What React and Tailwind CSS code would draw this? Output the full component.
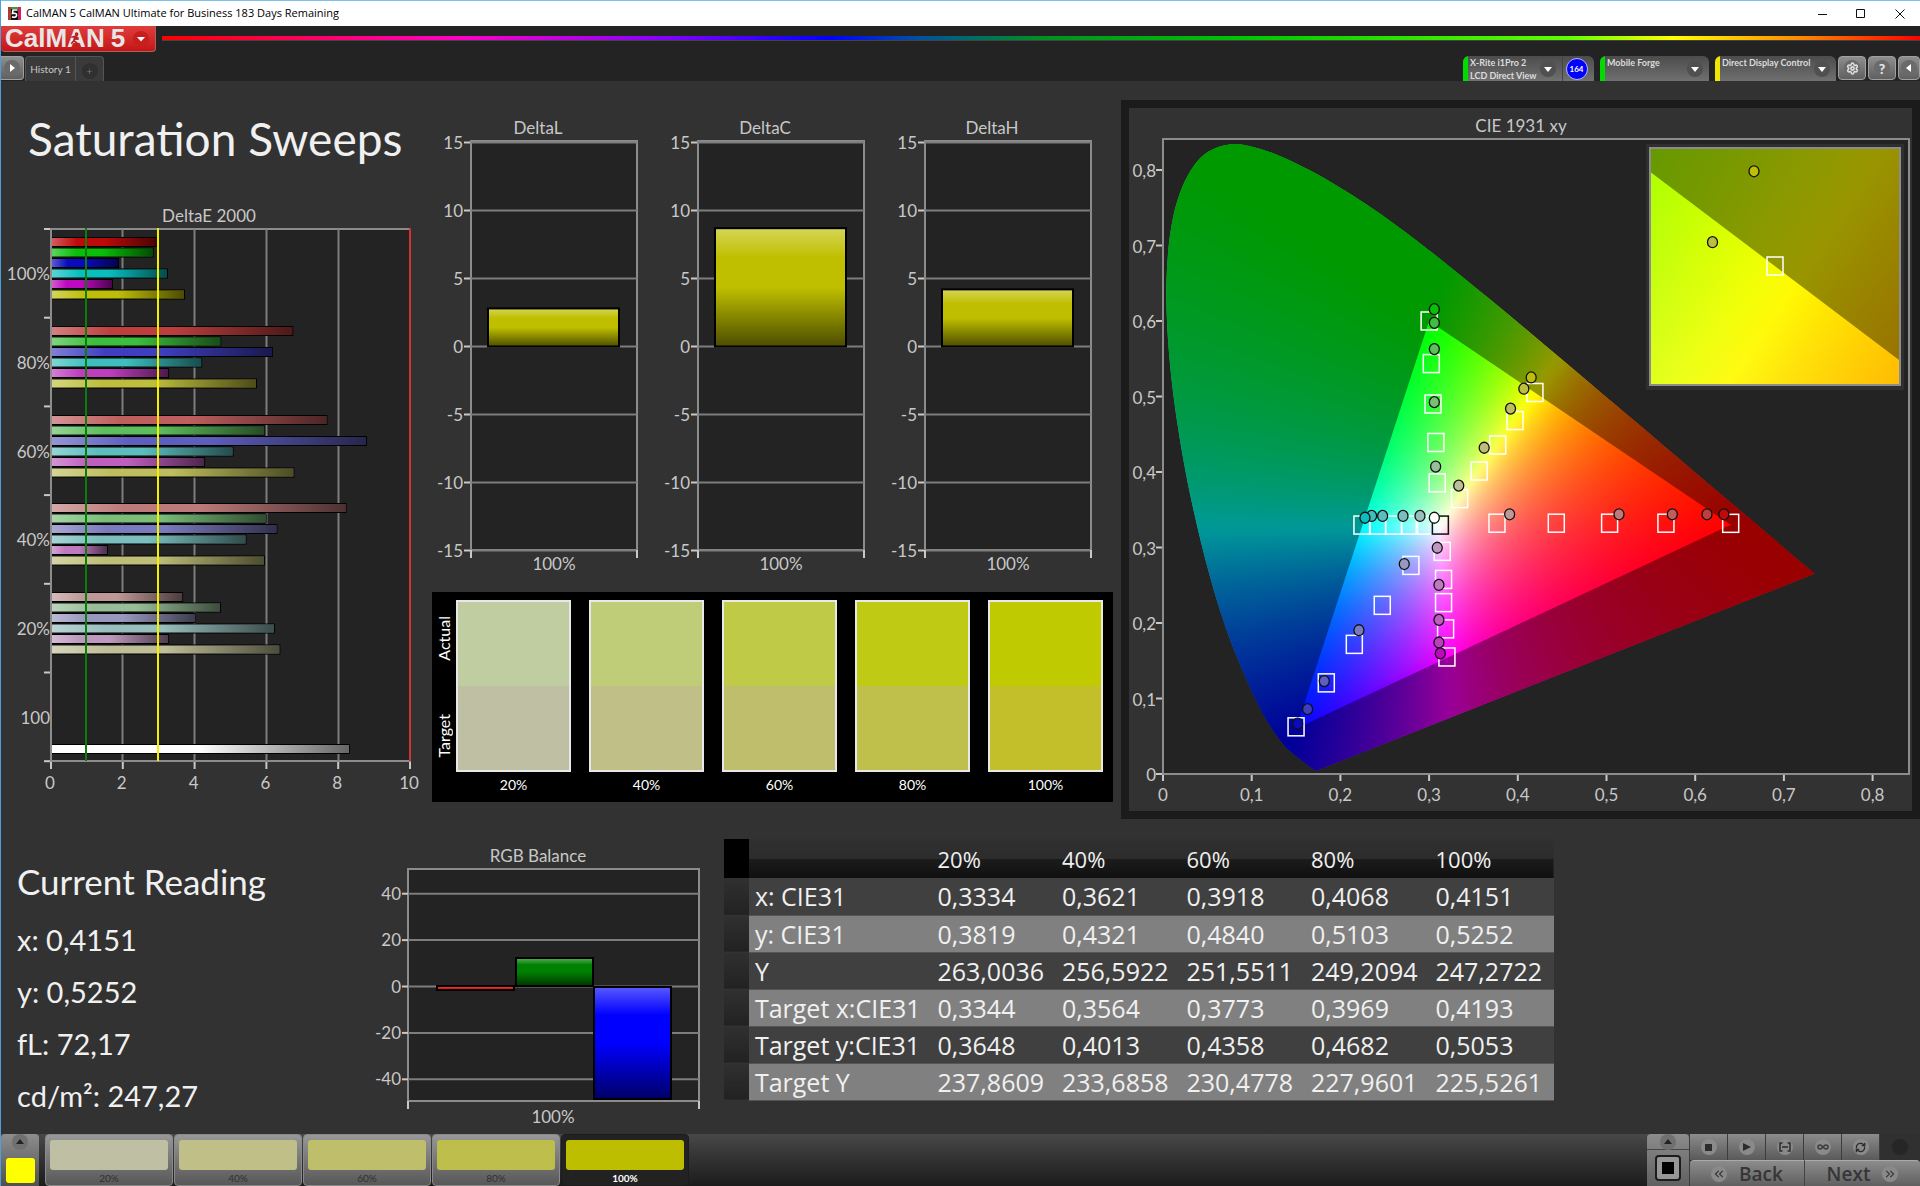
import { ChevronsLeft, ChevronsRight, Settings, Infinity as Loop, RefreshCw } from 'lucide-react';

const LEVELS = ['20%', '40%', '60%', '80%', '100%'];

const HUES = {
  red: [1, 0, 0],
  green: [0, 1, 0],
  blue: [0, 0, 1],
  cyan: [0, 1, 1],
  magenta: [1, 0, 1],
  yellow: [1, 1, 0],
};
const HUE_NAMES = Object.keys(HUES);
// weakest channel per saturation level, 20% to 100%
const LOW = [152, 122, 94, 62, 10];

const tint = (hue, level) =>
  `rgb(${HUES[hue].map((c) => (c ? 190 : LOW[level])).join(',')})`;

const deltaE = [
  { label: '100%', level: 4, values: [2.93, 2.85, 1.89, 3.25, 1.72, 3.72] },
  { label: '80%', level: 3, values: [6.73, 4.73, 6.16, 4.2, 3.28, 5.72] },
  { label: '60%', level: 2, values: [7.68, 5.95, 8.78, 5.07, 4.28, 6.76] },
  { label: '40%', level: 1, values: [8.21, 5.99, 6.29, 5.43, 1.58, 5.94] },
  { label: '20%', level: 0, values: [3.67, 4.72, 4.02, 6.22, 3.28, 6.37] },
];

const swatches = [
  { label: '20%', actual: '#bfcda0', target: '#bfbfa4', chip: '#bfbfa3' },
  { label: '40%', actual: '#bfcd78', target: '#c0bf87', chip: '#c0bf87' },
  { label: '60%', actual: '#bfcb46', target: '#bfbe6c', chip: '#bfbe6b' },
  { label: '80%', actual: '#bfca14', target: '#bfc04c', chip: '#bebe4c' },
  { label: '100%', actual: '#bfcb00', target: '#c2bf2a', chip: '#bebe00' },
];

const rows = [
  ['x: CIE31', '0,3334', '0,3621', '0,3918', '0,4068', '0,4151'],
  ['y: CIE31', '0,3819', '0,4321', '0,4840', '0,5103', '0,5252'],
  ['Y', '263,0036', '256,5922', '251,5511', '249,2094', '247,2722'],
  ['Target x:CIE31', '0,3344', '0,3564', '0,3773', '0,3969', '0,4193'],
  ['Target y:CIE31', '0,3648', '0,4013', '0,4358', '0,4682', '0,5053'],
  ['Target Y', '237,8609', '233,6858', '230,4778', '227,9601', '225,5261'],
];

const targets = [
  [0.3, 0.6], [0.3025, 0.5436], [0.3044, 0.4901], [0.3077, 0.4391], [0.3092, 0.3856],
  [0.3344, 0.3648], [0.3564, 0.4013], [0.3773, 0.4358], [0.3969, 0.4682], [0.4193, 0.5053],
  [0.3765, 0.3322], [0.4434, 0.3322], [0.5035, 0.3322], [0.567, 0.3322], [0.64, 0.332],
  [0.2243, 0.3297], [0.242, 0.3297], [0.26, 0.3297], [0.278, 0.3297], [0.2946, 0.3297],
  [0.3148, 0.2949], [0.3163, 0.2577], [0.3163, 0.227], [0.3186, 0.1922], [0.3201, 0.155],
  [0.2795, 0.2763], [0.2472, 0.2234], [0.2157, 0.1717], [0.1841, 0.1207], [0.15, 0.0625],
];

// listed from 20% to 100%
const readings = {
  green: [[0.3074, 0.4072], [0.3059, 0.4925], [0.3059, 0.5628], [0.3059, 0.5976], [0.3059, 0.6156]],
  yellow: [[0.3334, 0.3819], [0.3621, 0.4321], [0.3918, 0.484], [0.4068, 0.5103], [0.4151, 0.5252]],
  red: [[0.3908, 0.344], [0.5141, 0.344], [0.5742, 0.344], [0.6133, 0.344], [0.6324, 0.344]],
  cyan: [[0.2897, 0.3418], [0.2706, 0.3418], [0.2476, 0.3418], [0.2352, 0.3418], [0.2277, 0.3394]],
  magenta: [[0.3092, 0.2997], [0.3111, 0.2504], [0.3111, 0.2042], [0.3111, 0.1742], [0.3126, 0.1598]],
  blue: [[0.272, 0.2781], [0.2209, 0.1904], [0.1818, 0.1231], [0.163, 0.0859], [0.1518, 0.0667]],
};

const PRIMARIES = [[0.64, 0.33], [0.3, 0.6], [0.15, 0.06]];

const LOCUS = [
  [0.1741, 0.005], [0.1714, 0.0051], [0.1689, 0.0069], [0.1644, 0.0109], [0.1566, 0.0177],
  [0.144, 0.0297], [0.1355, 0.0399], [0.1241, 0.0578], [0.1096, 0.0868], [0.0913, 0.1327],
  [0.0687, 0.2007], [0.0454, 0.295], [0.0235, 0.4127], [0.0082, 0.5384], [0.0039, 0.6548],
  [0.0139, 0.7502], [0.0389, 0.812], [0.0743, 0.8338], [0.1142, 0.8262], [0.1547, 0.8059],
  [0.1929, 0.7816], [0.2296, 0.7543], [0.2658, 0.7243], [0.3016, 0.6923], [0.3731, 0.6245],
  [0.4441, 0.5547], [0.5125, 0.4866], [0.5752, 0.4242], [0.627, 0.3725], [0.6658, 0.334],
  [0.6915, 0.3083], [0.719, 0.2809], [0.7347, 0.2653],
];

const xyToRgb = (x, y) => {
  const z = 1 - x - y;
  return [
    3.2406 * x - 1.5372 * y - 0.4986 * z,
    -0.9689 * x + 1.8758 * y + 0.0415 * z,
    0.0557 * x - 0.204 * y + 1.057 * z,
  ];
};

// The ratio of two primaries is constant on every ray from the third one, so
// three conic gradients blended with "darken" give the full-brightness colours.
function gamutStyle(view) {
  const layers = PRIMARIES.map(([vx, vy], k) => {
    const stops = [];
    for (let a = 0; a <= 360; a += 1) {
      const t = (a * Math.PI) / 180;
      const rgb = xyToRgb(
        vx + (Math.sin(t) * 5) / view.sx,
        vy + (Math.cos(t) * 5) / view.sy
      ).map((c, i) => (i === k ? 0 : Math.max(0, c)));
      const max = Math.max(...rgb, 1e-6);
      const col = rgb.map((c, i) => (i === k ? 255 : Math.round((255 * c) / max)));
      stops.push(`rgb(${col.join(',')}) ${a}deg`);
    }
    return `conic-gradient(at ${view.px(vx)}px ${view.py(vy)}px, ${stops.join(',')})`;
  });
  return { background: layers.join(','), backgroundBlendMode: 'darken' };
}

function locusPath(view) {
  const p = LOCUS.map(([x, y]) => [view.px(x), view.py(y)]);
  let d = `M${p[0]}`;
  for (let i = 0; i < p.length - 1; i++) {
    const a = p[i - 1] || p[i];
    const b = p[i];
    const c = p[i + 1];
    const e = p[i + 2] || c;
    d += `C${b[0] + (c[0] - a[0]) / 6},${b[1] + (c[1] - a[1]) / 6} ${c[0] - (e[0] - b[0]) / 6},${c[1] - (e[1] - b[1]) / 6} ${c}`;
  }
  return d + 'Z';
}

const makeView = (x0, y0, sx, sy) => ({
  sx,
  sy,
  px: (x) => x0 + x * sx,
  py: (y) => y0 - y * sy,
});

const mainView = makeView(34, 666, 887, 755);
const zoomView = makeView(125 - 0.4193 * 5000, 118 + 0.5053 * 4760, 5000, 4760);

function Gamut({ view, width, height, id }) {
  const locus = locusPath(view);
  const tri = PRIMARIES.map(([x, y]) => `${view.px(x)},${view.py(y)}`).join('L');
  return (
    <g>
      <clipPath id={id}>
        <path d={locus} />
      </clipPath>
      <g clipPath={`url(#${id})`}>
        <foreignObject x="0" y="0" width={width} height={height}>
          <div className="h-full w-full" style={gamutStyle(view)} />
        </foreignObject>
        <path d={`${locus}M${tri}Z`} fillRule="evenodd" fill="#000" fillOpacity="0.4" />
      </g>
      {targets.map(([x, y]) => (
        <rect
          key={`${x}-${y}`}
          x={view.px(x) - 8}
          y={view.py(y) - 9}
          width="16"
          height="18"
          fill="none"
          stroke="#fff"
          strokeWidth="1.5"
        />
      ))}
      <rect
        x={view.px(0.3127) - 8}
        y={view.py(0.3297) - 9}
        width="16"
        height="18"
        fill="none"
        stroke="#111"
        strokeWidth="1.5"
      />
      {Object.entries(readings).map(([hue, list]) =>
        list.map(([x, y], i) => (
          <ellipse
            key={hue + i}
            cx={view.px(x)}
            cy={view.py(y)}
            rx="5"
            ry="5.5"
            fill={tint(hue, i)}
            stroke="#111"
            strokeWidth="1.3"
          />
        ))
      )}
      <ellipse
        cx={view.px(0.3059)}
        cy={view.py(0.3394)}
        rx="5"
        ry="5.5"
        fill="#fff"
        stroke="#111"
        strokeWidth="1.3"
      />
    </g>
  );
}

function CieChart() {
  return (
    <svg viewBox="0 0 783 703" className="block h-auto w-full bg-[#323232]" role="img" aria-label="CIE 1931 xy">
      <text x="392" y="24" textAnchor="middle" className="fill-[#c8c8c8] text-[17px]">
        CIE 1931 xy
      </text>
      <rect x="34" y="31" width="746" height="635" fill="#232323" />
      <Gamut view={mainView} width="783" height="703" id="locus-main" />
      <rect x="34" y="31" width="746" height="635" fill="none" stroke="#8c8c8c" strokeWidth="2" />
      {[0, 1, 2, 3, 4, 5, 6, 7, 8].map((n) => (
        <g key={n} className="fill-[#c8c8c8] text-[17px]">
          <path
            d={`M${mainView.px(n / 10)} 667v6M27 ${mainView.py(n / 10)}h6`}
            stroke="#c8c8c8"
            strokeWidth="2"
          />
          <text x={mainView.px(n / 10)} y="693" textAnchor="middle">
            {n ? `0,${n}` : '0'}
          </text>
          <text x="27" y={mainView.py(n / 10) + 7} textAnchor="end">
            {n ? `0,${n}` : '0'}
          </text>
        </g>
      ))}
      <rect x="517" y="36" width="258" height="246" fill="#2f2f2f" />
      <svg x="521" y="40" width="250" height="237" viewBox="0 0 250 237">
        <Gamut view={zoomView} width="250" height="237" id="locus-zoom" />
      </svg>
      <rect x="521" y="40" width="250" height="237" fill="none" stroke="#8c8c8c" strokeWidth="2" />
    </svg>
  );
}

function HBar({ y, value, color }) {
  const w = value * 36;
  return (
    <g>
      <rect x="50" y={y - 5} width={w} height="10" fill="#000" />
      <rect x="50" y={y - 4} width={w - 1} height="8" fill={color} />
      <rect x="50" y={y - 4} width={w - 1} height="8" fill="url(#gloss-x)" />
    </g>
  );
}

function DeltaEChart() {
  const band = 88.8;
  return (
    <svg viewBox="0 0 431 610" className="block h-auto w-full" role="img" aria-label="DeltaE 2000">
      <text x="208" y="26" textAnchor="middle" className="fill-[#c8c8c8] text-[17px]">
        DeltaE 2000
      </text>
      <rect x="50" y="33" width="359" height="532" fill="#232323" stroke="#8c8c8c" strokeWidth="2" />
      {[2, 4, 6, 8].map((n) => (
        <path key={n} d={`M${49.5 + n * 36} 33v532`} stroke="#7d7d7d" strokeWidth="2" />
      ))}
      {deltaE.map(({ values, level }, g) =>
        values.map((v, i) => (
          <HBar
            key={`${g}-${i}`}
            y={46 + Math.round(g * band) + i * 10.5}
            value={v}
            color={tint(HUE_NAMES[i], level)}
          />
        ))
      )}
      <HBar y={553} value={8.3} color="#fff" />
      <path d="M50 33v532" stroke="#8c8c8c" strokeWidth="2" />
      <path d="M85 32v533" stroke="#0a7d0a" strokeWidth="2" />
      <path d="M157 32v533" stroke="#f0f000" strokeWidth="2" />
      <path d="M409 32v533" stroke="#d23232" strokeWidth="2" />
      {[0, 1, 2, 3, 4, 5, 6].map((n) => (
        <path key={n} d={`M43 ${33 + n * 88.7}h6`} stroke="#c8c8c8" strokeWidth="2" />
      ))}
      <g className="fill-[#c8c8c8] text-[17px]">
        {[...deltaE.map((d) => d.label), '100'].map((label, i) => (
          <text key={i} x="49" y={84 + i * band} textAnchor="end">
            {label}
          </text>
        ))}
        {[0, 2, 4, 6, 8, 10].map((n) => (
          <g key={n}>
            <path d={`M${50 + n * 35.9} 566v7`} stroke="#c8c8c8" strokeWidth="2" />
            <text x={49 + n * 35.9} y="593" textAnchor="middle">
              {n}
            </text>
          </g>
        ))}
      </g>
    </svg>
  );
}

function DeltaChart({ title, value }) {
  const y = (n) => 246.5 - n * 13.6;
  return (
    <svg viewBox="0 0 227 484" className="block h-auto w-full" role="img" aria-label={title}>
      <text x="106" y="34" textAnchor="middle" className="fill-[#c8c8c8] text-[17px]">
        {title}
      </text>
      <rect x="39" y="41" width="166" height="409" fill="#232323" stroke="#8c8c8c" strokeWidth="2" />
      {[15, 10, 5, 0, -5, -10, -15].map((n) => (
        <g key={n}>
          <path d={`M39 ${y(n)}h166`} stroke="#7d7d7d" strokeWidth="2" />
          <path d={`M32 ${y(n)}h6`} stroke="#c8c8c8" strokeWidth="2" />
          <text x="31" y={y(n) + 6} textAnchor="end" className="fill-[#c8c8c8] text-[17px]">
            {n}
          </text>
        </g>
      ))}
      <path d="M39 450v8M205 450v8" stroke="#c8c8c8" strokeWidth="2" />
      <rect x="56" y={y(value)} width="131" height={value * 13.6} fill="#bfbf00" />
      <rect
        x="56"
        y={y(value)}
        width="131"
        height={value * 13.6}
        fill="url(#gloss-y)"
        stroke="#000"
        strokeWidth="2"
      />
      <text x="122" y="470" textAnchor="middle" className="fill-[#c8c8c8] text-[17px]">
        100%
      </text>
    </svg>
  );
}

function RgbBalance() {
  const y = (n) => 147.5 - n * 2.32;
  const bars = [
    { x: 41, top: 147, h: 4, color: '#ff2020' },
    { x: 120, top: 119, h: 28, color: '#008000' },
    { x: 198, top: 148, h: 112, color: '#0000ff' },
  ];
  return (
    <svg viewBox="-40 0 368 294" className="block h-auto w-full" role="img" aria-label="RGB Balance">
      <text x="142" y="23" textAnchor="middle" className="fill-[#c8c8c8] text-[17px]">
        RGB Balance
      </text>
      <rect x="12" y="30" width="291" height="232" fill="#232323" stroke="#8c8c8c" strokeWidth="2" />
      {[40, 20, 0, -20, -40].map((n) => (
        <g key={n}>
          <path d={`M12 ${y(n)}h291`} stroke="#7d7d7d" strokeWidth="2" />
          <path d={`M6 ${y(n)}h6`} stroke="#c8c8c8" strokeWidth="2" />
          <text x="5" y={y(n) + 6} textAnchor="end" className="fill-[#c8c8c8] text-[17px]">
            {n}
          </text>
        </g>
      ))}
      <path d="M12 262v8M303 262v8" stroke="#c8c8c8" strokeWidth="2" />
      {bars.map((b) => (
        <g key={b.color}>
          <rect x={b.x} y={b.top} width="77" height={b.h} fill={b.color} />
          <rect
            x={b.x}
            y={b.top}
            width="77"
            height={b.h}
            fill="url(#gloss-y)"
            stroke="#000"
            strokeWidth="2"
          />
        </g>
      ))}
      <text x="157" y="284" textAnchor="middle" className="fill-[#c8c8c8] text-[17px]">
        100%
      </text>
    </svg>
  );
}

function SwatchPanel() {
  return (
    <div className="mt-2 mr-2 flex bg-black pt-2 pr-2.5 pb-1 text-white">
      <div className="flex w-6 flex-col items-center justify-between pt-4 pb-10 text-base leading-5">
        <span className="rotate-180 [writing-mode:vertical-rl]">Actual</span>
        <span className="rotate-180 [writing-mode:vertical-rl]">Target</span>
      </div>
      <div className="grid flex-1 grid-cols-5 gap-[18px]">
        {swatches.map((s) => (
          <div key={s.label} className="text-center text-[14px] leading-[26px]">
            <div className="flex h-[172px] flex-col border-2 border-[#e8e8e8]">
              <div className="flex-1" style={{ background: s.actual }} />
              <div className="flex-1" style={{ background: s.target }} />
            </div>
            {s.label}
          </div>
        ))}
      </div>
    </div>
  );
}

function ReadingTable() {
  return (
    <table className="w-full table-fixed border-collapse self-start font-['Open_Sans',sans-serif] text-[25px] text-[#f0f0f0]">
      <colgroup>
        <col className="w-[3%]" />
        <col className="w-[22%]" />
        <col className="w-[15%]" />
        <col className="w-[15%]" />
        <col className="w-[15%]" />
        <col className="w-[15%]" />
        <col className="w-[15%]" />
      </colgroup>
      <thead>
        <tr className="h-[39px] bg-[linear-gradient(#303030,#2c2c2c_50%,#1c1c1c_50%,#101010)] text-left text-[22px]">
          <td className="bg-black" />
          <td />
          {LEVELS.map((l) => (
            <th key={l} scope="col" className="py-0 pl-1.5 leading-8 font-medium">
              {l}
            </th>
          ))}
        </tr>
      </thead>
      <tbody>
        {rows.map(([name, ...vals]) => (
          <tr
            key={name}
            className="h-[37px] leading-8 whitespace-nowrap odd:bg-[#404040] even:bg-[#808080]"
          >
            <td className="border-b border-[#333] bg-gradient-to-b from-[#303030] to-[#222]" />
            <th scope="row" className="border-b border-[#555] py-0 pl-1.5 text-left font-normal">
              {name}
            </th>
            {vals.map((v, i) => (
              <td key={i} className="border-b border-[#555] py-0 pl-1.5">
                {v}
              </td>
            ))}
          </tr>
        ))}
      </tbody>
    </table>
  );
}

function Knob({ children, className = 'bg-[#6a6a6a]' }) {
  return (
    <span className={`flex h-4 w-4 shrink-0 items-center justify-center rounded-full ${className}`}>
      {children}
    </span>
  );
}

function Arrow({ d = 'M0 0h8L4 5z', className = 'text-white' }) {
  return (
    <svg width="8" height="8" viewBox="0 0 8 8" className={className} fill="currentColor">
      <path d={d} />
    </svg>
  );
}

function Device({ color, lines, width, badge }) {
  return (
    <div className={`flex h-[25px] overflow-hidden rounded-t-md bg-gradient-to-b from-[#4c4c4c] to-[#707070] ${width}`}>
      <button type="button" aria-haspopup="listbox" className="flex min-w-0 flex-1 text-left text-[9px] leading-[13px] font-bold text-[#dcdcdc]">
        <span className={`mr-0.5 w-[5px] shrink-0 self-stretch ${color}`} />
        <span className="flex-1 whitespace-nowrap">
          {lines.map((l) => (
            <span key={l} className="block">
              {l}
            </span>
          ))}
        </span>
        <span className="mr-1.5 self-center">
          <Knob className="bg-[#505050]">
            <Arrow d="M0 2h8L4 7z" />
          </Knob>
        </span>
      </button>
      {badge && (
        <span className="flex w-8 items-center justify-center border-l border-[#444] pr-1">
          <span className="flex h-[22px] w-[22px] shrink-0 items-center justify-center rounded-full border border-[#b4b4ff] bg-[#0000ff] text-[8px] font-bold text-white">
            {badge}
          </span>
        </span>
      )}
    </div>
  );
}

function SquareButton({ label, width = 'w-7', children }) {
  return (
    <button
      type="button"
      aria-label={label}
      className={`flex h-6 items-center justify-center rounded-[4px] border border-[#a0a0a0] bg-gradient-to-b from-[#8e8e8e] to-[#606060] ${width}`}
    >
      {children}
    </button>
  );
}

function Header() {
  return (
    <header>
      <div className="flex h-[26px] items-center border-t border-[#7ac0ee] bg-white pl-[7px] font-['Open_Sans',sans-serif] text-[11px] text-black">
        <svg width="13" height="13" viewBox="0 0 13 13" className="mr-[5px]">
          <rect width="13" height="13" fill="#111" />
          <path d="M0 0h3v13H0z" fill="#b03a2e" />
          <path d="M10 0h3v13h-3z" fill="#d02060" />
          <path d="M3 0h7v2H3z" fill="#3c9a3c" />
          <path d="M9.500 3H5L4.500 6.500C8 5.500 9 7 8.500 8.800S5.500 10.500 4 9.800" fill="none" stroke="#fff" strokeWidth="1.600" />
        </svg>
        <span className="flex-1">CalMAN 5 CalMAN Ultimate for Business 183 Days Remaining</span>
        <button type="button" aria-label="Minimize" className="flex w-[38px] justify-center">
          <svg width="10" height="10" stroke="#111"><path d="M0 5.500h9" /></svg>
        </button>
        <button type="button" aria-label="Maximize" className="flex w-[38px] justify-center">
          <svg width="10" height="10" stroke="#111" fill="none"><path d="M.5 .5h8v8h-8z" /></svg>
        </button>
        <button type="button" aria-label="Close" className="flex w-10 justify-center">
          <svg width="10" height="10" stroke="#111"><path d="M.5 .5l9 9M9.500 .5l-9 9" /></svg>
        </button>
      </div>
      <div className="flex h-[30px] items-start bg-[#232323]">
        <button
          type="button"
          aria-label="CalMAN 5 menu"
          className="flex h-[26px] w-[155px] shrink-0 items-center rounded-b-[4px] border-r border-b border-[#a86060] bg-gradient-to-b from-[#e03c3c] to-[#c41414] pb-0.5 pl-1"
        >
          <span className="relative mr-1.5 font-['Liberation_Sans',sans-serif] text-[26px] leading-5 font-bold text-[#e6e6e6]">
            CalMAN
            <svg className="absolute top-1 left-[65px]" width="10" height="15" viewBox="0 0 9 14" fill="none" stroke="#b41c1c" strokeWidth="1.400">
              <circle cx="6" cy="2" r="1" />
              <path d="M1 5l3-1 2 2 2-.5M4 4.500L3.500 8l2.500 2v3M3.500 8L1 11" />
            </svg>
          </span>
          <span className="font-['Liberation_Sans',sans-serif] text-[26px] leading-5 font-bold text-[#e6e6e6]">5</span>
          <span className="mt-0.5 ml-2">
            <Knob className="bg-[#c81e1e]">
              <Arrow d="M0 2h8L4 6.500z" />
            </Knob>
          </span>
        </button>
        <div className="mt-[10px] ml-1.5 h-[5px] flex-1 border-b border-[#444] bg-[linear-gradient(90deg,#ff0000,#ff00c8_17%,#8000ff_29%,#0000ff_38%,#0050a0_43%,#009020_50%,#00c800_62%,#60ff00_80%,#ffff00_86%,#ff8c00_93%,#ff0000)]" />
      </div>
      <div className="flex h-[25px] items-start bg-[#232323]">
        <button
          type="button"
          aria-label="Expand"
          className="mr-px flex h-6 w-[23px] items-center justify-center rounded-r-[4px] border border-l-0 border-[#a0a0a0] bg-gradient-to-b from-[#8e8e8e] to-[#606060]"
        >
          <Knob>
            <Arrow d="M2 0v8l5-4z" />
          </Knob>
        </button>
        <nav className="flex h-full rounded-t-[4px] border-x border-t border-[#555] bg-[#3a3a3a] text-[10px] text-[#c8c8c8]">
          <a href="#history" className="flex w-[50px] items-center justify-center border-r border-[#555] whitespace-nowrap">
            History 1
          </a>
          <button type="button" aria-label="Add tab" className="flex w-[27px] items-center justify-center pt-1 text-[#777]">
            <Knob className="bg-[#303030]">+</Knob>
          </button>
        </nav>
        <div className="ml-auto flex">
          <Device color="bg-[#00dc00]" lines={['X-Rite i1Pro 2', 'LCD Direct View']} width="mr-1.5 w-[131px]" badge="164" />
          <Device color="bg-[#00dc00]" lines={['Mobile Forge']} width="mr-1.5 w-[109px]" />
          <Device color="bg-[#f0e600]" lines={['Direct Display Control']} width="mr-0.5 w-[121px]" />
          <div className="flex gap-0.5">
            <SquareButton label="Settings">
              <Knob>
                <Settings size={13} strokeWidth={3} color="#dcdcdc" />
              </Knob>
            </SquareButton>
            <SquareButton label="Help">
              <Knob className="bg-[#6a6a6a] text-[14px] font-black text-[#e6e6e6]">?</Knob>
            </SquareButton>
            <SquareButton label="Collapse" width="w-[22px]">
              <Knob>
                <Arrow d="M6 0v8L1 4z" />
              </Knob>
            </SquareButton>
          </div>
        </div>
      </div>
    </header>
  );
}

function TransportButton({ label, children }) {
  return (
    <button
      type="button"
      aria-label={label}
      className="flex w-[38px] items-center justify-center border-r border-[#3c3c3c] bg-gradient-to-b from-[#8c8c8c] to-[#5a5a5a]"
    >
      <Knob className="bg-[#8a8a8a]">{children}</Knob>
    </button>
  );
}

function Footer() {
  return (
    <footer className="flex h-[52px] bg-gradient-to-b from-[#484848] to-[#1c1c1c]">
      <button
        type="button"
        aria-label="Show pattern"
        className="mr-1.5 flex w-[38px] flex-col items-center justify-between rounded-t-[4px] bg-gradient-to-b from-[#8e8e8e] to-[#505050] pb-[3px]"
      >
        <Knob className="bg-[#707070]">
          <Arrow d="M0 6h8L4 1z" className="text-[#222]" />
        </Knob>
        <span className="h-[25px] w-[29px] rounded-[3px] bg-[#ffff00]" />
      </button>
      <div className="flex gap-px">
        {swatches.map((s, i) => (
          <button
            key={s.label}
            type="button"
            className={
              i === 4
                ? 'flex w-32 flex-col rounded-[4px] border border-[#1c1c1c] bg-[#222] px-1 pt-[5px] text-[10px] leading-5 font-bold text-white'
                : 'flex w-32 flex-col rounded-[4px] border border-[#8a8a8a] bg-gradient-to-b from-[#989898] to-[#585858] px-1 pt-[5px] text-[10px] leading-5 text-[#303030]'
            }
          >
            <span className="h-[30px] w-full shrink-0 rounded-[3px]" style={{ background: s.chip }} />
            <span className="w-full text-center leading-4">{s.label}</span>
          </button>
        ))}
      </div>
      <div className="ml-auto flex">
        <div className="flex w-[42px] flex-col rounded-t-[4px] bg-gradient-to-b from-[#8c8c8c] to-[#606060]">
          <button type="button" aria-label="More" className="flex h-4 items-center justify-center border-b border-[#444]">
            <Knob className="bg-[#707070]">
              <Arrow d="M0 6h8L4 1z" className="text-[#222]" />
            </Knob>
          </button>
          <button type="button" aria-label="Stop pattern" className="flex flex-1 items-center justify-center">
            <span className="flex h-[26px] w-[26px] items-center justify-center rounded-[4px] border-2 border-[#1c1c1c] bg-[#969696]">
              <span className="h-3 w-3 bg-black" />
            </span>
          </button>
        </div>
        <div className="flex flex-col border-l border-[#3c3c3c]">
          <div className="flex h-[26px]">
            <TransportButton label="Stop">
              <span className="h-[7px] w-[7px] bg-[#2c2c2c]" />
            </TransportButton>
            <TransportButton label="Play">
              <Arrow d="M0 0v8l8-4z" className="text-[#2c2c2c]" />
            </TransportButton>
            <TransportButton label="Read range">
              <svg width="12" height="10" viewBox="0 0 12 10" fill="none" stroke="#2c2c2c" strokeWidth="1.500">
                <path d="M3.500 1H1v8h2.500M8.500 1H11v8H8.500M3 5h6" />
              </svg>
            </TransportButton>
            <TransportButton label="Continuous">
              <Loop size={12} strokeWidth={3} color="#3c3c3c" />
            </TransportButton>
            <TransportButton label="Refresh">
              <RefreshCw size={11} strokeWidth={3} color="#2c2c2c" />
            </TransportButton>
            <span className="flex w-10 items-center justify-center bg-[#303030]">
              <Knob className="bg-[#262626]" />
            </span>
          </div>
          <div className="flex flex-1 font-['Open_Sans',sans-serif] text-[19px] leading-6 font-semibold text-[#363636]">
            <button type="button" className="flex w-[115px] items-center justify-center gap-3 rounded-tl-[4px] border-t border-r border-[#444] border-t-[#aaa] bg-gradient-to-b from-[#8c8c8c] to-[#606060]">
              <Knob className="bg-[#8a8a8a]">
                <ChevronsLeft size={14} />
              </Knob>
              Back
            </button>
            <button type="button" className="flex flex-1 items-center justify-center gap-3 rounded-tr-[4px] border-t border-t-[#aaa] bg-gradient-to-b from-[#8c8c8c] to-[#606060]">
              Next
              <Knob className="bg-[#8a8a8a]">
                <ChevronsRight size={14} />
              </Knob>
            </button>
          </div>
        </div>
      </div>
    </footer>
  );
}

export default function App() {
  return (
    <div className="flex min-h-screen flex-col border-l border-[#4aa0dc] bg-[#323232] font-[Lato,sans-serif]">
      <svg width="0" height="0" className="absolute">
        <linearGradient id="gloss-x">
          <stop offset="0" stopColor="#fff" stopOpacity="0.35" />
          <stop offset="0.25" stopColor="#fff" stopOpacity="0" />
          <stop offset="0.5" stopColor="#000" stopOpacity="0" />
          <stop offset="1" stopColor="#000" stopOpacity="0.6" />
        </linearGradient>
        <linearGradient id="gloss-y" x2="0" y2="1">
          <stop offset="0" stopColor="#fff" stopOpacity="0.35" />
          <stop offset="0.25" stopColor="#fff" stopOpacity="0" />
          <stop offset="0.5" stopColor="#000" stopOpacity="0" />
          <stop offset="1" stopColor="#000" stopOpacity="0.6" />
        </linearGradient>
      </svg>
      <Header />
      <main className="flex-1">
        <section className="grid grid-cols-[431fr_689fr_799fr] pt-[19px]">
          <div>
            <h1 className="pt-2 pb-[26px] pl-[27px] text-[46px] leading-[62px] whitespace-nowrap text-[#f0f0f0]">
              Saturation Sweeps
            </h1>
            <DeltaEChart />
          </div>
          <div>
            <div className="mr-2 grid grid-cols-3">
              <DeltaChart title="DeltaL" value={2.8} />
              <DeltaChart title="DeltaC" value={8.7} />
              <DeltaChart title="DeltaH" value={4.2} />
            </div>
            <SwatchPanel />
          </div>
          <div className="self-start bg-[#1b1b1b] p-2">
            <CieChart />
          </div>
        </section>
        <section className="grid grid-cols-[355fr_368fr_830fr_366fr] pt-5">
          <div className="pt-4 pl-4 text-[29px] leading-[52px] text-[#f0f0f0]">
            <h2 className="pb-[7px] text-[35px] leading-[52px]">Current Reading</h2>
            <p>x: 0,4151</p>
            <p>y: 0,5252</p>
            <p>fL: 72,17</p>
            <p>cd/m²: 247,27</p>
          </div>
          <RgbBalance />
          <ReadingTable />
        </section>
      </main>
      <Footer />
    </div>
  );
}
